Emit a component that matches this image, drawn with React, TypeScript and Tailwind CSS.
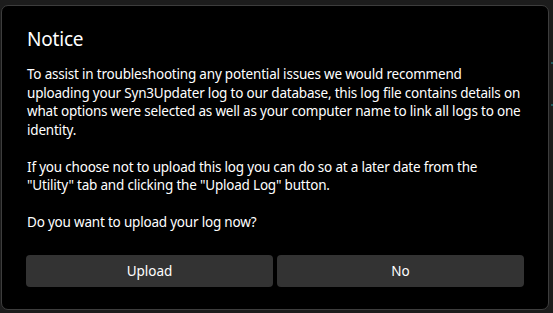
import React from "react";

export default function App() {
  const font = { fontFamily: '"Noto Sans", "Open Sans", Arial, sans-serif' };
  return (
    <div
      className="relative w-[553px] h-[313px] overflow-hidden bg-[#1c1c1c] pt-[5px] pl-[1px] flex flex-col"
      style={font}
    >
      <div className="absolute right-0 top-[62px] w-[2px] h-[2px] bg-[#1e5b5e]" />
      <div className="absolute right-0 top-[104px] w-[2px] h-[2px] bg-[#1e5b5e]" />
      <div className="shrink-0 w-[548px] h-[305px] rounded-[7px] border border-[#3d3d3d] bg-black px-[24px] pt-[20px] pb-[22px] flex flex-col">
        <h1 className="text-[19px] leading-[26px] tracking-[-0.2px] text-white pl-[1px]">Notice</h1>
        <div className="mt-[13px] pl-[1px] text-[13.5px] leading-[18.5px] tracking-[-0.2px] text-white">
          <p>
            To assist in troubleshooting any potential issues we would recommend
            uploading your Syn3Updater log to our database, this log file contains details on
            what options were selected as well as your computer name to link all logs to one
            identity.
          </p>
          <p className="mt-[18.5px]">
            If you choose not to upload this log you can do so at a later date from the
            "Utility" tab and clicking the "Upload Log" button.
          </p>
          <p className="mt-[18.5px]">Do you want to upload your log now?</p>
        </div>
        <div className="mt-auto flex gap-[4px]">
          <button className="flex-1 h-[32px] rounded-[4px] bg-[#333333] text-[13.5px] text-white">
            Upload
          </button>
          <button className="flex-1 h-[32px] rounded-[4px] bg-[#333333] text-[13.5px] text-white">
            No
          </button>
        </div>
      </div>
      <div className="whitespace-nowrap text-[11px] leading-[12px] text-[#9a9a9a] pl-[4px] pt-[2px]">
        04-16 05:001 Checking Existing File: OBST 140306.00.850H
      </div>
    </div>
  );
}
